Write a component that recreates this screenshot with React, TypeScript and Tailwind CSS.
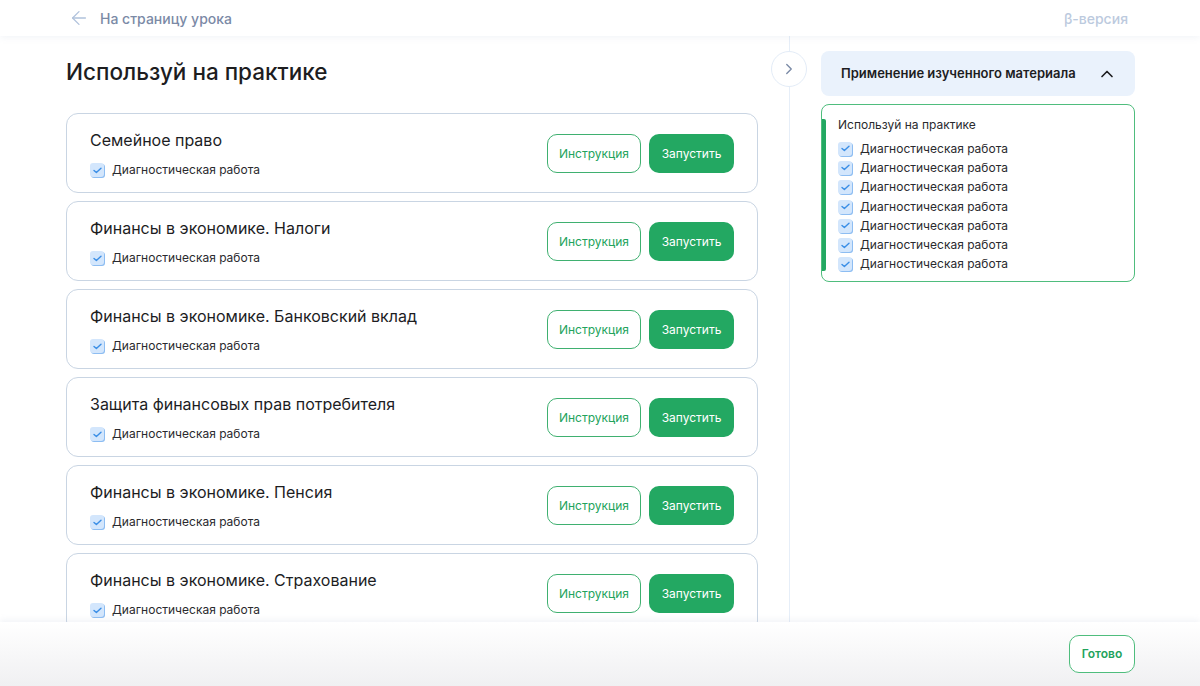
import { ArrowLeft, ChevronRight, ChevronUp } from "lucide-react";

const tasks = [
  "Семейное право",
  "Финансы в экономике. Налоги",
  "Финансы в экономике. Банковский вклад",
  "Защита финансовых прав потребителя",
  "Финансы в экономике. Пенсия",
  "Финансы в экономике. Страхование",
];

function Check() {
  return (
    <span className="flex h-[14px] w-[14px] shrink-0 items-center justify-center rounded-[3px] bg-[#d3e6fc] shadow-[1px_1px_0_#8dbdf2]">
      <svg width="9" height="7" viewBox="0 0 9 7" fill="none">
        <path d="M1 3.4 3.4 5.6 8 1.2" stroke="#3a8ee6" strokeWidth="1.4" strokeLinecap="round" strokeLinejoin="round" />
      </svg>
    </span>
  );
}

export default function App() {
  return (
    <div className="flex h-[686px] w-[1200px] flex-col overflow-hidden bg-white font-['Inter',sans-serif] text-[#1d1d1f]">
      <header className="z-10 flex h-[36px] shrink-0 items-center justify-between pl-[68px] pr-[72px] shadow-[0_2px_6px_rgba(160,175,200,0.12)]">
        <div className="flex items-center gap-[10px] text-[#7b8aa6]">
          <ArrowLeft className="h-[22px] w-[22px] text-[#b0c2dc]" strokeWidth={1.4} />
          <span className="text-[14px] font-medium">На страницу урока</span>
        </div>
        <span className="text-[14px] font-medium text-[#bccade]">β-версия</span>
      </header>

      <main className="flex min-h-0 flex-1">
        <section className="w-[758px] shrink-0 pl-[66px]">
          <h1 className="mt-[21px] text-[22.5px] font-medium leading-[30px] text-[#1d1d1f]">
            Используй на практике
          </h1>
          <div className="mt-[26px] flex flex-col gap-[8px]">
            {tasks.map((t) => (
              <div
                key={t}
                className="flex h-[80px] shrink-0 items-center justify-between rounded-[12px] border border-[#c9d5e3] pl-[23px] pr-[23px]"
              >
                <div className="flex flex-col pt-[2px]">
                  <span className="text-[16px] leading-[22px] text-[#1d1d1f]">{t}</span>
                  <div className="mt-[10px] flex items-center gap-[8px]">
                    <Check />
                    <span className="text-[12px] text-[#2a2a2e]">Диагностическая работа</span>
                  </div>
                </div>
                <div className="flex items-center gap-[8px] pt-[1px]">
                  <button className="flex h-[39px] w-[94px] items-center justify-center rounded-[10px] border border-[#3fb070] text-[12px] font-normal text-[#22a35c]">
                    Инструкция
                  </button>
                  <button className="flex h-[39px] w-[85px] items-center justify-center rounded-[10px] bg-[#23a862] text-[12px] font-normal text-white">
                    Запустить
                  </button>
                </div>
              </div>
            ))}
          </div>
        </section>

        <div className="relative ml-[31px] w-px shrink-0 bg-[#e6eef8]">
          <button className="absolute left-[-18px] top-[15px] flex h-[36px] w-[36px] items-center justify-center rounded-full border border-[#e3ecf7] bg-white">
            <ChevronRight className="h-[18px] w-[18px] text-[#7b8aa6]" strokeWidth={1.8} />
          </button>
        </div>

        <aside className="ml-[31px] w-[314px] shrink-0 pt-[15px]">
          <div className="flex h-[45px] items-center justify-between rounded-[8px] bg-[#eaf2fc] pl-[20px] pr-[18px]">
            <span className="text-[13px] font-semibold text-[#1d1d1f]">Применение изученного материала</span>
            <ChevronUp className="h-[20px] w-[20px] text-[#1d1d1f]" strokeWidth={2} />
          </div>
          <div className="mt-[8px] flex rounded-[8px] border border-[#4fbd7d] pt-[12px] pb-[7px]">
            <div className="mt-[2px] mb-[3px] w-[4px] shrink-0 rounded-r-[2px] bg-[#23a862]" />
            <div className="pl-[12px]">
              <div className="text-[12px] leading-[16px] text-[#2a2a2e]">Используй на практике</div>
              <div className="mt-[6px] flex flex-col">
                {Array.from({ length: 7 }).map((_, i) => (
                  <div key={i} className="flex h-[19.3px] items-center gap-[8px]">
                    <Check />
                    <span className="text-[12px] text-[#2a2a2e]">Диагностическая работа</span>
                  </div>
                ))}
              </div>
            </div>
          </div>
        </aside>
      </main>

      <footer className="z-10 flex h-[64px] shrink-0 items-center justify-end bg-gradient-to-b from-white to-[#f0f0f2] pr-[65px] shadow-[0_-2px_6px_rgba(160,175,200,0.15)]">
        <button className="flex h-[38px] w-[66px] items-center justify-center rounded-[10px] border border-[#4fbd7d] bg-white text-[12px] font-semibold text-[#22a35c]">
          Готово
        </button>
      </footer>
    </div>
  );
}
